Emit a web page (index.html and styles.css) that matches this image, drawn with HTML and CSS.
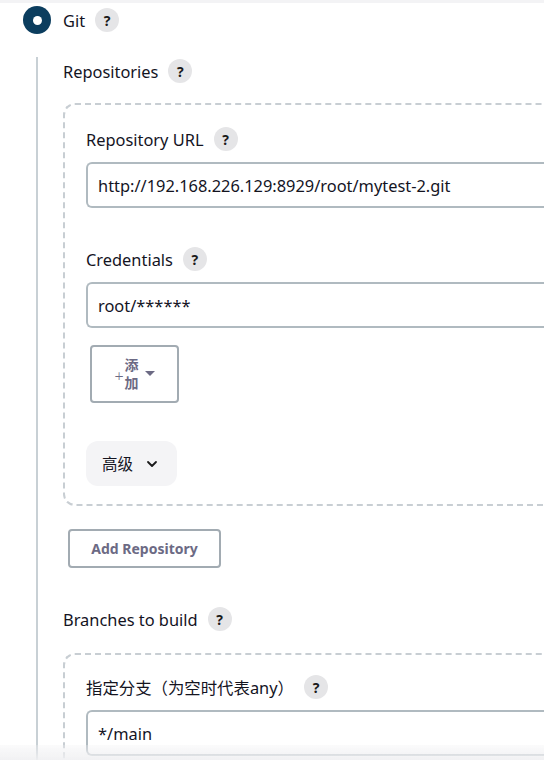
FILE: index.html
```html
<!DOCTYPE html>
<html>
<head>
<meta charset="utf-8">
<link rel="stylesheet" href="styles.css">
</head>
<body>
<div class="topstrip"></div>
<div class="radio-row">
  <span class="radio"><span class="dot"></span></span>
  <span class="label">Git</span>
  <span class="help">?</span>
</div>
<div class="section">
  <div class="field-title">Repositories <span class="help">?</span></div>
  <div class="dashed repo-box">
    <div class="field-title">Repository URL <span class="help">?</span></div>
    <div class="input">http://192.168.226.129:8929/root/mytest-2.git</div>
    <div class="field-title cred">Credentials <span class="help">?</span></div>
    <div class="input">root/******</div>
    <div class="add-btn">
      <span class="plus">+</span>
      <span class="stack"><span>添</span><span>加</span></span>
      <span class="caret"></span>
    </div>
    <div class="adv-btn"><span>高级</span><svg width="12" height="8" viewBox="0 0 12 8"><path d="M2 2 L6 6 L10 2" fill="none" stroke="#1a1a1a" stroke-width="1.8" stroke-linecap="round" stroke-linejoin="round"/></svg></div>
  </div>
  <div class="add-repo">Add Repository</div>
  <div class="field-title branches">Branches to build <span class="help">?</span></div>
  <div class="dashed branch-box">
    <div class="field-title">指定分支（为空时代表any） <span class="help">?</span></div>
    <div class="input">*/main</div>
  </div>
</div>
<div class="bottom-fade"></div>
</body>
</html>
```

FILE: styles.css
```css
html, body {
  margin: 0;
  padding: 0;
  background: #fff;
  width: 544px;
  height: 760px;
  overflow: hidden;
  font-family: "Noto Sans", "Noto Sans CJK SC", sans-serif;
  color: #14141f;
}
.topstrip {
  height: 3px;
  background: #f3f3f5;
}
.radio-row {
  display: flex;
  align-items: center;
  padding-left: 23px;
  margin-top: 3px;
  height: 28px;
}
.radio {
  width: 28px;
  height: 28px;
  border-radius: 50%;
  background: #0b3d5e;
  display: flex;
  align-items: center;
  justify-content: center;
}
.dot {
  width: 9px;
  height: 9px;
  border-radius: 50%;
  background: #fff;
}
.label {
  margin-left: 12px;
  font-size: 16.4px;
}
.help {
  display: inline-flex;
  align-items: center;
  justify-content: center;
  width: 24px;
  height: 24px;
  border-radius: 50%;
  background: #e5e5e7;
  font-size: 14px;
  font-weight: 700;
  color: #1a1a1a;
  margin-left: 10px;
  font-family: "Noto Sans", sans-serif;
}
.section {
  margin-left: 36px;
  margin-top: 23px;
  border-left: 2px solid #c8d0d5;
  padding-left: 25px;
  padding-bottom: 40px;
}
.field-title {
  display: flex;
  align-items: center;
  font-size: 16.4px;
  height: 28px;
}
.dashed {
  margin-top: 18px;
  border: 2px dashed #c8ced3;
  border-right: none;
  border-radius: 12px 0 0 12px;
  padding: 20px 0 18px 21px;
}
.input {
  margin-top: 9px;
  height: 42px;
  border: 2px solid #b0bac0;
  border-right: none;
  border-radius: 6px 0 0 6px;
  display: flex;
  align-items: center;
  padding-left: 10px;
  font-size: 16.4px;
}
.field-title.cred {
  margin-top: 37px;
}
.add-btn {
  margin-top: 17px;
  margin-left: 4px;
  width: 89px;
  height: 58px;
  border: 2px solid #a2abb2;
  border-radius: 4px;
  display: flex;
  align-items: center;
  justify-content: center;
  color: #6c6a84;
  box-sizing: border-box;
}
.plus {
  font-size: 16px;
  margin-top: 4px;
  font-weight: 300;
}
.stack {
  display: flex;
  flex-direction: column;
  font-size: 14px;
  font-weight: 700;
  line-height: 18px;
  margin-left: 1px;
}
.caret {
  width: 0;
  height: 0;
  border-left: 5px solid transparent;
  border-right: 5px solid transparent;
  border-top: 5px solid #6c6a84;
  margin-left: 6px;
  margin-top: -2px;
}
.adv-btn {
  margin-top: 38px;
  width: 91px;
  height: 45px;
  box-sizing: border-box;
  border-radius: 12px;
  background: #f4f4f6;
  display: flex;
  align-items: center;
  padding-left: 16px;
  gap: 13px;
  font-size: 15.5px;
}
.add-repo {
  margin-top: 23px;
  margin-left: 5px;
  width: 153px;
  height: 39px;
  box-sizing: border-box;
  border: 2px solid #a2abb2;
  border-radius: 4px;
  display: flex;
  align-items: center;
  justify-content: center;
  font-size: 14px;
  font-weight: 700;
  color: #6c6a84;
}
.field-title.branches {
  margin-top: 37px;
}
.branch-box {
  margin-top: 20px;
  padding-top: 18px;
}
.bottom-fade {
  position: fixed;
  left: 0;
  right: 0;
  bottom: 0;
  height: 15px;
  background: linear-gradient(to bottom, rgba(240,240,242,0.3), rgba(240,240,242,0.9));
}
```
